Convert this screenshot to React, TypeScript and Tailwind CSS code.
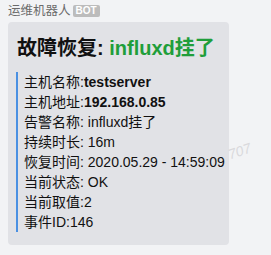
import React from 'react';

const rows: { label: string; value: string; bold?: boolean }[] = [
  { label: '主机名称:', value: 'testserver', bold: true },
  { label: '主机地址:', value: '192.168.0.85', bold: true },
  { label: '告警名称: ', value: 'influxd挂了' },
  { label: '持续时长: ', value: '16m' },
  { label: '恢复时间: ', value: '2020.05.29 - 14:59:09' },
  { label: '当前状态: ', value: 'OK' },
  { label: '当前取值:', value: '2' },
  { label: '事件ID:', value: '146' },
];

export default function App() {
  return (
    <div
      className="relative w-[271px] h-[255px] bg-[#f2f3f5] pl-2 pt-[3px] overflow-hidden"
      style={{ fontFamily: '"Liberation Sans", "Noto Sans CJK SC", sans-serif' }}
    >
      {/* Sender */}
      <div className="flex items-center gap-[2px] h-[16px]">
        <span className="text-[12.5px] leading-[16px] text-[#6b6b6b]">运维机器人</span>
        <span className="bg-[#bcbcbc] text-white text-[10px] font-bold leading-[12px] px-[3px] rounded-[2px]">BOT</span>
      </div>

      {/* Message card */}
      <div className="mt-[3px] w-[221px] h-[223px] bg-[#e1e2e6] rounded-[4px] px-2 pt-[13px]">
        <div className="text-[20px] font-bold leading-[26px] text-[#111] pl-[1px] whitespace-nowrap">
          故障恢复: <span className="text-[#1f9e3a]">influxd挂了</span>
        </div>
        <div className="mt-[11px] border-l-2 border-[#4a90e2] pl-[6px]">
          {rows.map((r) => (
            <div key={r.label} className="text-[14px] leading-[20px] text-[#111] whitespace-nowrap">
              {r.label}
              <span className={r.bold ? 'font-bold' : ''}>{r.value}</span>
            </div>
          ))}
        </div>
      </div>

      {/* Watermark */}
      <span className="absolute left-[228px] top-[141px] text-[14px] italic text-[#d9d9dc] -rotate-[18deg] select-none">
        707
      </span>
    </div>
  );
}
